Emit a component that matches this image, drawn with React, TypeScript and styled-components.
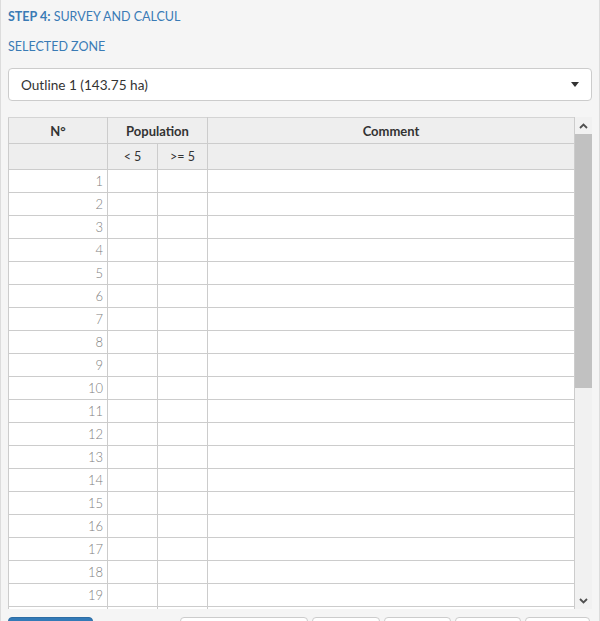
import React from "react";
import styled, { createGlobalStyle } from "styled-components";

const Global = createGlobalStyle`
  html, body { margin: 0; padding: 0; background: #f5f5f5; }
  body { font-family: Lato, "Open Sans", "Liberation Sans", sans-serif; overflow: hidden; }
  * { box-sizing: border-box; }
`;

const Panel = styled.div`
  width: 600px;
  height: 621px;
  background: #f5f5f5;
  border-left: 1px solid #dcdcdc;
  border-right: 1px solid #dcdcdc;
  padding: 8px 7px 0 7px;
  display: flex;
  flex-direction: column;
  overflow: hidden;
  & > * { flex-shrink: 0; }
`;

const Title = styled.div`
  height: 18px;
  line-height: 18px;
  font-size: 12.5px;
  color: #3a7bb5;
  b { font-weight: 700; }
`;

const Label = styled.div`
  margin-top: 12px;
  height: 18px;
  line-height: 18px;
  font-size: 12.5px;
  color: #3a7bb5;
`;

const Select = styled.div`
  margin-top: 12px;
  height: 33px;
  background: #fff;
  border: 1px solid #ccc;
  border-radius: 4px;
  display: flex;
  align-items: center;
  justify-content: space-between;
  padding: 0 12px 0 12px;
  font-size: 13.6px;
  color: #333;
`;

const Caret = styled.span`
  width: 0;
  height: 0;
  border-left: 4px solid transparent;
  border-right: 4px solid transparent;
  border-top: 5px solid #333;
`;

const Grid = styled.div`
  margin-top: 16px;
  height: 492px;
  display: flex;
`;

const Viewport = styled.div`
  flex: 1;
  overflow: hidden;
  background: #fff;
`;

const Table = styled.table`
  width: 100%;
  border-collapse: collapse;
  table-layout: fixed;
  font-size: 12px;
`;

const Th = styled.th`
  height: 26px;
  padding: 0;
  background: #eeeeee;
  border: 1px solid #cccccc;
  border-top: 1px solid #d4d4d4;
  color: #333;
  font-weight: 700;
  text-align: center;
  font-size: 13px;
`;

const SubTh = styled(Th)`
  font-weight: 400;
  font-size: 12.5px;
`;

const Td = styled.td<{ $num?: boolean }>`
  height: 23px;
  padding: 0 4px 0 0;
  border: 1px solid #cccccc;
  text-align: ${(p) => (p.$num ? "right" : "left")};
  color: #808080;
  font-weight: 300;
  font-size: 13px;
`;

const Scrollbar = styled.div`
  width: 17px;
  display: flex;
  flex-direction: column;
  background: #f1f1f1;
`;

const ArrowBtn = styled.div`
  height: 17px;
  display: flex;
  align-items: center;
  justify-content: center;
  background: #f1f1f1;
`;

const Thumb = styled.div`
  height: 254px;
  background: #c1c1c1;
`;

const Track = styled.div`
  flex: 1;
`;

const Buttons = styled.div`
  margin-top: 8px;
  display: flex;
  gap: 4px;
  height: 34px;
`;

const Btn = styled.div<{ $w: number; $primary?: boolean; $ml?: number }>`
  width: ${(p) => p.$w}px;
  margin-left: ${(p) => p.$ml ?? 0}px;
  height: 34px;
  border-radius: 4px;
  border: 1px solid ${(p) => (p.$primary ? "#2e6da4" : "#cccccc")};
  background: ${(p) => (p.$primary ? "#337ab7" : "#ffffff")};
`;

const Chevron = ({ up }: { up?: boolean }) => (
  <svg width="9" height="6" viewBox="0 0 9 6">
    <path
      d={up ? "M1 5 L4.5 1.5 L8 5" : "M1 1 L4.5 4.5 L8 1"}
      fill="none"
      stroke="#505050"
      strokeWidth="1.8"
    />
  </svg>
);

export default function App() {
  const rows = Array.from({ length: 20 }, (_, i) => i + 1);
  return (
    <>
      <Global />
      <Panel>
        <Title>
          <b>STEP 4:</b> SURVEY AND CALCUL
        </Title>
        <Label>SELECTED ZONE</Label>
        <Select>
          <span>Outline 1 (143.75 ha)</span>
          <Caret />
        </Select>
        <Grid>
          <Viewport>
            <Table>
              <colgroup>
                <col style={{ width: 99 }} />
                <col style={{ width: 50 }} />
                <col style={{ width: 50 }} />
                <col />
              </colgroup>
              <thead>
                <tr>
                  <Th>N°</Th>
                  <Th colSpan={2}>Population</Th>
                  <Th>Comment</Th>
                </tr>
                <tr>
                  <SubTh />
                  <SubTh>&lt; 5</SubTh>
                  <SubTh>&gt;= 5</SubTh>
                  <SubTh />
                </tr>
              </thead>
              <tbody>
                {rows.map((r) => (
                  <tr key={r}>
                    <Td $num>{r}</Td>
                    <Td />
                    <Td />
                    <Td />
                  </tr>
                ))}
              </tbody>
            </Table>
          </Viewport>
          <Scrollbar>
            <ArrowBtn>
              <Chevron up />
            </ArrowBtn>
            <Thumb />
            <Track />
            <ArrowBtn>
              <Chevron />
            </ArrowBtn>
          </Scrollbar>
        </Grid>
        <Buttons>
          <Btn $w={85} $primary />
          <Btn $w={128} $ml={83} />
          <Btn $w={68} />
          <Btn $w={67} />
          <Btn $w={66} />
          <Btn $w={65} />
        </Buttons>
      </Panel>
    </>
  );
}
